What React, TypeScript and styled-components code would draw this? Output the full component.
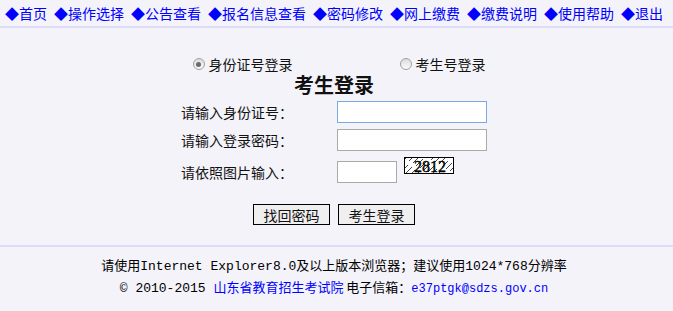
import React from 'react';
import styled, { createGlobalStyle } from 'styled-components';

const GlobalStyle = createGlobalStyle`
  html, body {
    margin: 0;
    padding: 0;
    background: #f3f3f9;
  }
  body {
    font-family: "Noto Sans CJK SC", "Liberation Sans", sans-serif;
    color: #000;
  }
`;

const navItems = ['首页', '操作选择', '公告查看', '报名信息查看', '密码修改', '网上缴费', '缴费说明', '使用帮助', '退出'];

// pseudo-random noise for the captcha picture
const dots = Array.from({ length: 80 }, (_, i) => ({
  x: (i * 37 + 11) % 48,
  y: (i * 53 + 7) % 15,
}));

const Captcha = () => (
  <CaptchaBox>
    <svg width="48" height="15" viewBox="0 0 48 15">
      <rect width="48" height="15" fill="#fff" />
      {dots.map((d, i) => (
        <rect key={i} x={d.x} y={d.y} width="1" height="1" fill="#444" />
      ))}
      <text x="25" y="13.5" textAnchor="middle" fontFamily="Liberation Serif, serif" fontSize="16" fill="#000" stroke="#000" strokeWidth="0.4">
        2812
      </text>
    </svg>
  </CaptchaBox>
);

const App = () => {
  return (
    <>
      <GlobalStyle />
      <Page>
        <Nav>
          {navItems.map((item) => (
            <NavLink key={item} href="#">
              ◆{item}
            </NavLink>
          ))}
        </Nav>

        <Main>
          <RadioRow>
            <RadioLabel>
              <Radio $checked />
              身份证号登录
            </RadioLabel>
            <RadioLabel>
              <Radio />
              考生号登录
            </RadioLabel>
          </RadioRow>
          <Title>考生登录</Title>

          <Form>
            <FieldLabel>请输入身份证号：</FieldLabel>
            <TextInput $focused autoFocus />
            <FieldLabel>请输入登录密码：</FieldLabel>
            <TextInput type="password" />
            <FieldLabel>请依照图片输入：</FieldLabel>
            <CodeCell>
              <TextInput $short />
              <Captcha />
            </CodeCell>
          </Form>

          <Buttons>
            <Button>找回密码</Button>
            <Button>考生登录</Button>
          </Buttons>
        </Main>

        <Footer>
          <FooterLine>
            请使用<Mono>Internet Explorer8.0</Mono>及以上版本浏览器；建议使用<Mono>1024*768</Mono>分辨率
          </FooterLine>
          <FooterLine>
            <Mono>© 2010-2015 </Mono>
            <FooterLink href="#">山东省教育招生考试院</FooterLink> 电子信箱：
            <Email href="#">e37ptgk@sdzs.gov.cn</Email>
          </FooterLine>
        </Footer>
      </Page>
    </>
  );
};

export default App;

const Page = styled.div`
  width: 673px;
  height: 311px;
  overflow: hidden;
`;

const Nav = styled.div`
  display: flex;
  gap: 7px;
  padding: 4px 0 0 5px;
  height: 22px;
  border-bottom: 2px solid #dcdcf6;
  box-sizing: content-box;
`;

const NavLink = styled.a`
  font-size: 14px;
  line-height: 18px;
  color: #0000ff;
  text-decoration: none;
  white-space: nowrap;
`;

const Main = styled.div`
  display: flex;
  flex-direction: column;
  align-items: center;
  padding: 27px 5px 0 0;
  height: 190px;
  border-bottom: 2px solid #dcdcf6;
`;

const RadioRow = styled.div`
  display: flex;
  justify-content: space-between;
  width: 293px;
  margin-left: 10px;
`;

const RadioLabel = styled.label`
  display: flex;
  align-items: center;
  gap: 4px;
  font-size: 14px;
  line-height: 18px;
  color: #111;
`;

const Radio = styled.span<{ $checked?: boolean }>`
  position: relative;
  width: 12px;
  height: 12px;
  border-radius: 50%;
  border: 1px solid #a0a0a0;
  background: linear-gradient(#dcdcdc, #fbfbfb);
  box-sizing: border-box;
  &::after {
    content: '';
    display: ${(p) => (p.$checked ? 'block' : 'none')};
    position: absolute;
    left: 2.5px;
    top: 2.5px;
    width: 5px;
    height: 5px;
    border-radius: 50%;
    background: #6a6a6a;
  }
`;

const Title = styled.div`
  font-size: 20px;
  font-weight: bold;
  line-height: 22px;
  margin-top: 1px;
  color: #111;
`;

const Form = styled.div`
  display: grid;
  grid-template-columns: 156px 150px;
  grid-template-rows: 28px 28px 36px;
  align-items: center;
  margin-top: 2px;
`;

const FieldLabel = styled.div`
  font-size: 14px;
  line-height: 18px;
  color: #111;
`;

const TextInput = styled.input<{ $focused?: boolean; $short?: boolean }>`
  width: ${(p) => (p.$short ? '60px' : '150px')};
  height: 22px;
  box-sizing: border-box;
  margin: 0;
  padding: 1px 2px;
  background: #fff;
  border: 1px solid ${(p) => (p.$focused ? '#7aaae2' : '#a9a9a9')};
  font-size: 14px;
  outline: none;
  &:focus {
    border-color: #7aaae2;
  }
`;

const CodeCell = styled.div`
  display: flex;
  align-items: flex-start;
  gap: 7px;
`;

const CaptchaBox = styled.div`
  width: 48px;
  height: 15px;
  border: 1px solid #000;
  margin-top: -4px;
  line-height: 0;
`;

const Buttons = styled.div`
  display: flex;
  gap: 8px;
  margin-top: 14px;
`;

const Button = styled.button`
  width: 77px;
  height: 21px;
  padding: 0;
  border: 1px solid #000;
  background: #efefef;
  font-family: "Noto Sans CJK SC", sans-serif;
  font-size: 14px;
  line-height: 18px;
  color: #111;
`;

const Footer = styled.div`
  display: flex;
  flex-direction: column;
  align-items: center;
  padding: 9px 5px 0 0;
  gap: 2px;
`;

const FooterLine = styled.div`
  font-size: 13px;
  line-height: 18px;
  color: #000;
  white-space: nowrap;
`;

const Mono = styled.span`
  font-family: "Liberation Mono", monospace;
  font-size: 13px;
`;

const FooterLink = styled.a`
  color: #0000ff;
  text-decoration: none;
`;

const Email = styled.a`
  font-family: "Liberation Mono", monospace;
  font-size: 12px;
  color: #0000ff;
  text-decoration: none;
`;
